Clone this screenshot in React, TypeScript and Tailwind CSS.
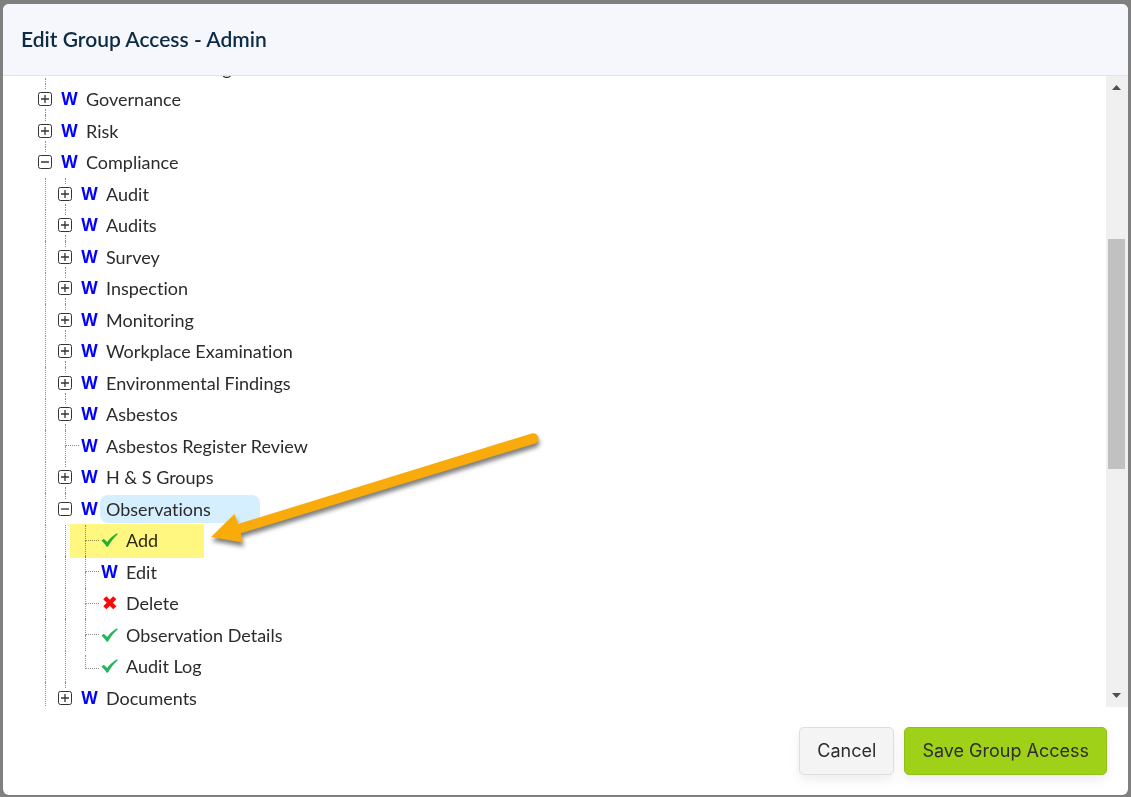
import clsx from "clsx";

type Access = "write" | "allow" | "deny";
type Kind = "open" | "closed" | "leaf" | "last";

interface TreeRow {
  label: string;
  level: number;
  kind: Kind;
  access: Access;
  selected?: boolean;
  marked?: boolean;
}

const rows: TreeRow[] = [
  { label: "Contractor Settings", level: 1, kind: "closed", access: "write" },
  { label: "Governance", level: 1, kind: "closed", access: "write" },
  { label: "Risk", level: 1, kind: "closed", access: "write" },
  { label: "Compliance", level: 1, kind: "open", access: "write" },
  { label: "Audit", level: 2, kind: "closed", access: "write" },
  { label: "Audits", level: 2, kind: "closed", access: "write" },
  { label: "Survey", level: 2, kind: "closed", access: "write" },
  { label: "Inspection", level: 2, kind: "closed", access: "write" },
  { label: "Monitoring", level: 2, kind: "closed", access: "write" },
  { label: "Workplace Examination", level: 2, kind: "closed", access: "write" },
  { label: "Environmental Findings", level: 2, kind: "closed", access: "write" },
  { label: "Asbestos", level: 2, kind: "closed", access: "write" },
  { label: "Asbestos Register Review", level: 2, kind: "leaf", access: "write" },
  { label: "H & S Groups", level: 2, kind: "closed", access: "write" },
  { label: "Observations", level: 2, kind: "open", access: "write", selected: true },
  { label: "Add", level: 3, kind: "leaf", access: "allow", marked: true },
  { label: "Edit", level: 3, kind: "leaf", access: "write" },
  { label: "Delete", level: 3, kind: "leaf", access: "deny" },
  { label: "Observation Details", level: 3, kind: "leaf", access: "allow" },
  { label: "Audit Log", level: 3, kind: "last", access: "allow" },
  { label: "Documents", level: 2, kind: "closed", access: "write" },
];

function AccessIcon({ access }: { access: Access }) {
  if (access === "write") {
    return <span className="font-['Open_Sans',sans-serif] text-[17px] font-bold text-[#0000ff]">W</span>;
  }
  if (access === "deny") {
    return (
      <svg width="16" height="16" viewBox="0 0 16 16" aria-label="Denied">
        <path d="M2.8 2.8 12.8 12.8M12.8 2.8 2.8 12.8" stroke="#fb0808" strokeWidth="4.4" />
      </svg>
    );
  }
  return (
    <svg width="17" height="16" viewBox="0 0 17 16" aria-label="Allowed">
      <path d="M.4 8.8 2.8 6.7 6.2 9.9C8.7 6.6 11.8 3.6 15.8 1.2L16.8 2.3C12.8 5.8 9.8 9.6 7.1 14.6L5.6 14.8C4.3 12.5 2.6 10.4.4 8.8Z" fill="#22b65a" />
    </svg>
  );
}

function Toggle({ open, label }: { open: boolean; label: string }) {
  return (
    <div className="flex w-5 flex-col items-center self-stretch">
      <span className="flex-1 border-l border-dotted border-[#8c8c8c]" />
      <button type="button" aria-label={label} aria-expanded={open} className="my-[3px] block size-[14px]">
        <svg width="14" height="14" viewBox="0 0 14 14" fill="none" stroke="#333">
          <rect x=".5" y=".5" width="13" height="13" rx="2" />
          <path d={open ? "M3 7h8" : "M3 7h8M7 3v8"} strokeWidth="1.3" />
        </svg>
      </button>
      <span className={clsx("flex-1", !open && "border-l border-dotted border-[#8c8c8c]")} />
    </div>
  );
}

function Branch({ last }: { last: boolean }) {
  return (
    <div className="flex w-6 flex-col self-stretch pl-[10px]">
      <span className={clsx("flex-1 border-b border-l border-dotted border-[#8c8c8c]", last && "mt-1")} />
      <span className={clsx("flex-1", !last && "border-l border-dotted border-[#8c8c8c]")} />
    </div>
  );
}

function Row({ row }: { row: TreeRow }) {
  const hasChildren = row.kind === "open" || row.kind === "closed";

  return (
    <li className="relative flex h-[1.75em] items-center text-lg">
      {Array.from({ length: row.level - 1 }, (_, i) => (
        <div key={i} className="w-5 self-stretch pl-[10px]">
          <div className="h-full border-l border-dotted border-[#8c8c8c]" />
        </div>
      ))}
      {hasChildren ? <Toggle open={row.kind === "open"} label={row.label} /> : <Branch last={row.kind === "last"} />}
      <span className={clsx("flex w-[17px] justify-center", hasChildren ? "ml-[6px]" : "ml-[2px]")}>
        <AccessIcon access={row.access} />
      </span>
      <a
        href="#"
        className={clsx(
          "ml-[2px] rounded-lg pl-[6px] font-['Lato',sans-serif] leading-7 text-[#2b2b2b] [font-variant-ligatures:none]",
          row.selected && "w-40 bg-[#d5effe]",
        )}
      >
        {row.label}
      </a>
      {row.marked && <span className="absolute -top-px left-[35px] h-[34px] w-[134px] bg-[#fff780] mix-blend-multiply" />}
    </li>
  );
}

function ScrollBar() {
  return (
    <div className="flex w-[22px] shrink-0 flex-col items-center bg-[#f0f0f0] pt-[9px] pr-[3px] pb-[9px] pl-[2px]" aria-hidden="true">
      <svg width="9" height="5" viewBox="0 0 9 5">
        <path d="M0 5 4.5 0 9 5Z" fill="#505050" />
      </svg>
      <span className="grow-[149]" />
      <span className="w-[17px] grow-[230] bg-[#c1c1c1]" />
      <span className="grow-[224]" />
      <svg width="9" height="5" viewBox="0 0 9 5">
        <path d="M0 0h9L4.5 5Z" fill="#505050" />
      </svg>
    </div>
  );
}

function Pointer() {
  return (
    <svg className="pointer-events-none absolute top-[356px] left-[200px]" width="344" height="128" viewBox="0 0 344 128" aria-hidden="true">
      <g fill="#f9ab0b" className="drop-shadow-[1px_4px_2px_rgba(0,0,0,0.5)]">
        <path d="M328.5 1.5 35 92 31.5 82 8 105 40 110.5 37.7 101.3 332 11.5A5.2 5.2 0 0 0 328.5 1.5Z" />
      </g>
    </svg>
  );
}

export default function App() {
  return (
    <div className="flex h-screen flex-col bg-[#808080] px-[3px] pt-1 pb-[2px]">
      <section role="dialog" aria-labelledby="dialog-title" className="flex min-h-0 flex-1 flex-col overflow-hidden rounded-md bg-white">
        <header className="border-b border-[#e1e4ec] bg-[#f5f7fc] px-[18px] pt-[21px] pb-[23px]">
          <h1 id="dialog-title" className="font-['Lato',sans-serif] text-[21px] leading-[27px] font-semibold text-[#0d2b45]">
            Edit Group Access - Admin
          </h1>
        </header>
        <div className="relative flex min-h-0 flex-1">
          <div className="min-w-0 flex-1 overflow-hidden pl-8">
            <ul className="-mt-6">
              {rows.map((row) => (
                <Row key={row.label} row={row} />
              ))}
            </ul>
          </div>
          <ScrollBar />
          <Pointer />
        </div>
        <footer className="flex justify-end gap-[10px] px-[21px] py-5 font-['Inter',sans-serif] text-lg text-[#2d2d2d]">
          <button type="button" className="h-12 rounded-[5px] border border-[#dedede] bg-[#f4f4f4] px-[17px] shadow-[0_5px_12px_rgba(0,0,0,0.07)]">
            Cancel
          </button>
          <button type="button" className="h-12 rounded-[5px] border border-[#91bf17] bg-[#a0d119] px-[17px] shadow-[0_5px_12px_rgba(0,0,0,0.07)]">
            Save Group Access
          </button>
        </footer>
      </section>
    </div>
  );
}
